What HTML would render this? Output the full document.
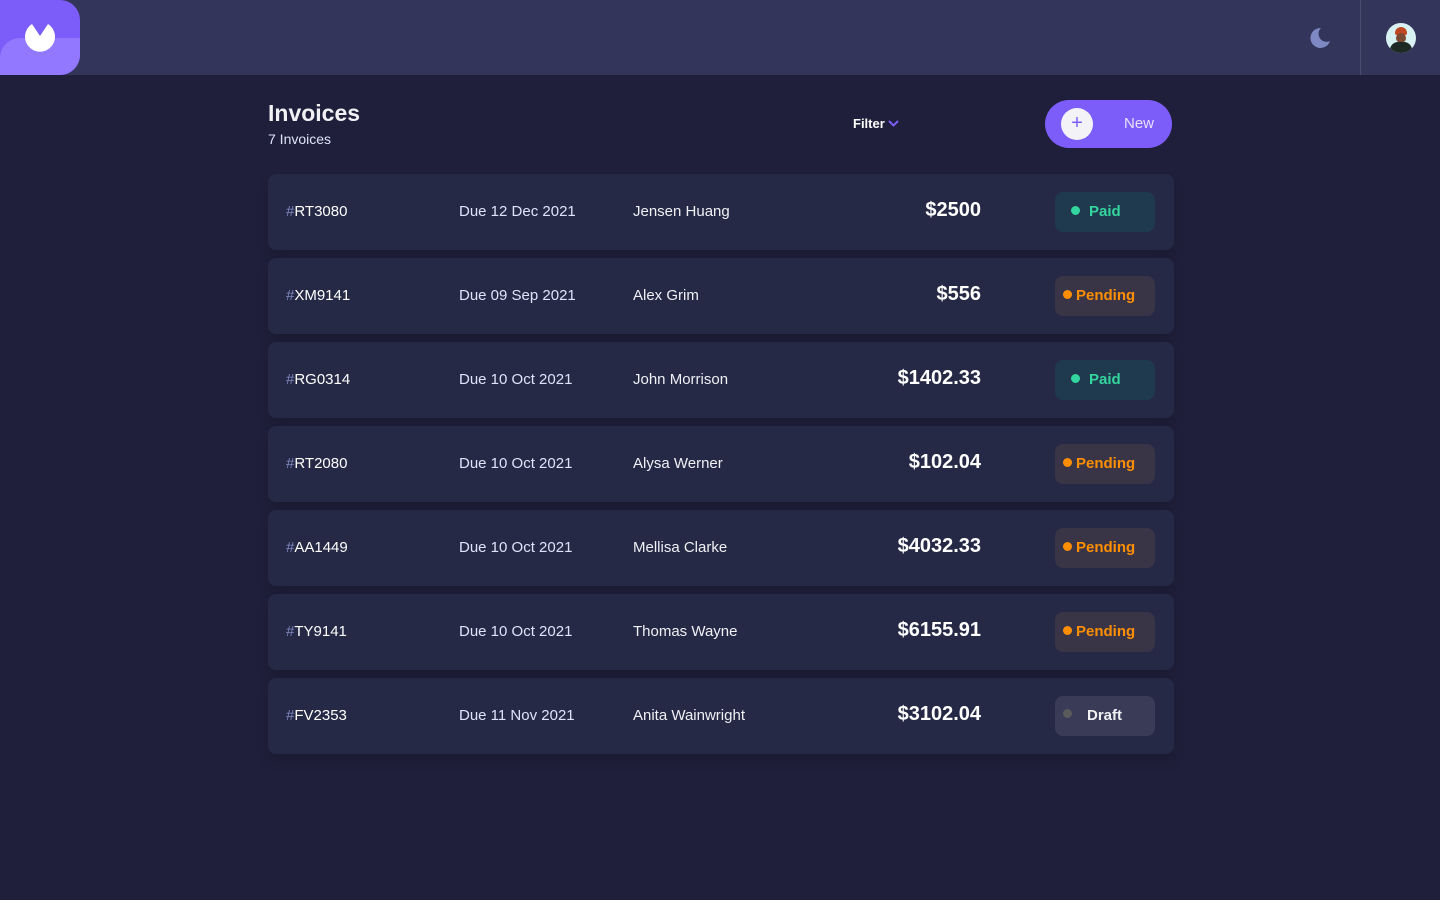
<!DOCTYPE html>
<html><head><style>
*{margin:0;padding:0;box-sizing:border-box}
body{width:1440px;height:900px;background:#1f1f3b;font-family:"Liberation Sans",sans-serif;color:#fff;position:relative;overflow:hidden}
.top{position:absolute;left:0;top:0;width:1440px;height:75px;background:#33355a}
.logo{position:absolute;left:0;top:0;width:80px;height:75px;background:#7c5df9;border-radius:0 20px 20px 0;overflow:hidden}
.logo .lo{position:absolute;left:0;top:38px;width:80px;height:40px;background:#9277ff;border-radius:20px 0 0 0}
.sep{position:absolute;left:1360px;top:0;width:1px;height:75px;background:#494e6e}
.av{position:absolute;left:1386px;top:23px;width:30px;height:30px;border-radius:50%;background:#d8f1f2;overflow:hidden}
h1{position:absolute;left:268px;top:100px;font-size:23px;font-weight:bold;color:#f0f0f5}
.sub{position:absolute;left:268px;top:131px;font-size:14px;color:#dfe3fa}
.filter{position:absolute;left:853px;top:116px;font-size:13px;font-weight:bold}
.new{position:absolute;left:1045px;top:100px;width:127px;height:48px;border-radius:24px;background:#7c5df9}
.new .c{position:absolute;left:16px;top:8px;width:32px;height:32px;border-radius:50%;background:#f3f2f7;color:#7c5df9;text-align:center;line-height:31px;font-size:20px}
.new span{position:absolute;left:79px;top:15px;font-size:15px;color:#e6e2fb}
.row{position:absolute;left:268px;width:906px;height:76px;background:#252945;border-radius:8px;box-shadow:0 8px 12px rgba(0,0,0,.12);font-size:15px}
.row div{position:absolute;top:29px}
.id{left:18px;color:#fff}.id b{color:#7e88c3;font-weight:normal}
.d{left:191px;color:#dfe3fa}.n{left:365px;color:#f0f0f5}
.amt{right:193px;font-size:20px;font-weight:bold;top:25px!important}
.bd{left:787px;top:18px!important;width:100px;height:40px;border-radius:8px;font-weight:bold;font-size:15px;line-height:39px}
.bd i{position:absolute;top:14px;width:9px;height:9px;border-radius:50%}
.paid{background:#1f3a4e;color:#33d69f}.paid i{left:16px;background:#33d69f}.paid span{margin-left:34px}
.pend{background:#3a3447;color:#ff8f00}.pend i{left:8px;background:#ff8f00}.pend span{margin-left:21px}
.draft{background:#393b57;color:#f0f0f5}.draft i{left:8px;top:13px;background:#5a5a5a}.draft span{margin-left:32px}
</style></head><body>
<div class="top"></div>
<div class="logo"><div class="lo"></div>
<svg style="position:absolute;left:24px;top:22px" width="32" height="32" viewBox="0 0 32 32"><path d="M8 2 L16 14 L24 2 A15 15 0 1 1 8 2Z" fill="#fff"/></svg></div>
<svg style="position:absolute;left:1309px;top:27px" width="22" height="22" viewBox="0 0 22 22"><path d="M12 1A10 10 0 1 0 21 14 8 8 0 0 1 12 1Z" fill="#7e88c3"/></svg>
<div class="sep"></div>
<div class="av"><div style="position:absolute;left:9px;top:4px;width:12px;height:8px;border-radius:6px 6px 2px 2px;background:#c0471f"></div><div style="position:absolute;left:10px;top:10px;width:10px;height:10px;border-radius:50%;background:#7a4a33"></div><div style="position:absolute;left:4px;top:19px;width:22px;height:14px;border-radius:8px 8px 0 0;background:#1d2a24"></div></div>
<h1>Invoices</h1>
<div class="sub">7 Invoices</div>
<div class="filter">Filter <svg width="11" height="8" viewBox="0 0 11 8"><path d="M1 1l4.5 4.5L10 1" stroke="#7c5df9" stroke-width="2" fill="none"/></svg></div>
<div class="new"><div class="c">+</div><span>New</span></div>

<div class="row" style="top:174px"><div class="id"><b>#</b>RT3080</div><div class="d">Due 12 Dec 2021</div><div class="n">Jensen Huang</div><div class="amt">$2500</div><div class="bd paid"><i></i><span>Paid</span></div></div>
<div class="row" style="top:258px"><div class="id"><b>#</b>XM9141</div><div class="d">Due 09 Sep 2021</div><div class="n">Alex Grim</div><div class="amt">$556</div><div class="bd pend"><i></i><span>Pending</span></div></div>
<div class="row" style="top:342px"><div class="id"><b>#</b>RG0314</div><div class="d">Due 10 Oct 2021</div><div class="n">John Morrison</div><div class="amt">$1402.33</div><div class="bd paid"><i></i><span>Paid</span></div></div>
<div class="row" style="top:426px"><div class="id"><b>#</b>RT2080</div><div class="d">Due 10 Oct 2021</div><div class="n">Alysa Werner</div><div class="amt">$102.04</div><div class="bd pend"><i></i><span>Pending</span></div></div>
<div class="row" style="top:510px"><div class="id"><b>#</b>AA1449</div><div class="d">Due 10 Oct 2021</div><div class="n">Mellisa Clarke</div><div class="amt">$4032.33</div><div class="bd pend"><i></i><span>Pending</span></div></div>
<div class="row" style="top:594px"><div class="id"><b>#</b>TY9141</div><div class="d">Due 10 Oct 2021</div><div class="n">Thomas Wayne</div><div class="amt">$6155.91</div><div class="bd pend"><i></i><span>Pending</span></div></div>
<div class="row" style="top:678px"><div class="id"><b>#</b>FV2353</div><div class="d">Due 11 Nov 2021</div><div class="n">Anita Wainwright</div><div class="amt">$3102.04</div><div class="bd draft"><i></i><span>Draft</span></div></div>
</body></html>
